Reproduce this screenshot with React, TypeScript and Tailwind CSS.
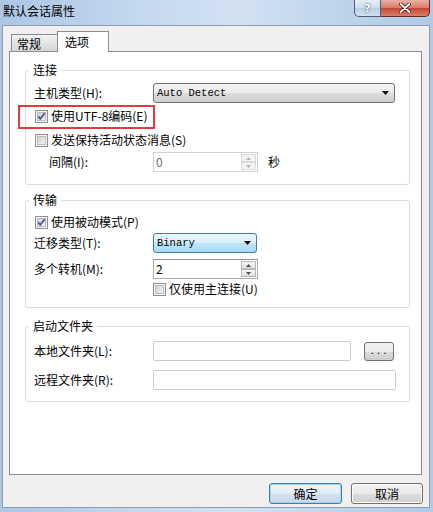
import React from 'react';

// Win7 style dialog: 默认会话属性 / 选项 tab

const CheckBox = ({ checked }: { checked?: boolean }) => (
  <svg width="13" height="13" viewBox="0 0 13 13" className="shrink-0">
    <defs>
      <linearGradient id="cbInner" x1="0" y1="0" x2="1" y2="1">
        <stop offset="0" stopColor="#c9ccd1" />
        <stop offset="1" stopColor="#f7f7f7" />
      </linearGradient>
    </defs>
    <rect x="0.5" y="0.5" width="12" height="12" fill="#f6f6f6" stroke="#8e8f8f" />
    <rect x="2.5" y="2.5" width="8" height="8" fill="url(#cbInner)" stroke="#b9bcc1" />
    {checked && (
      <path d="M3.2 6.3 L5.3 8.8 L9.8 3.2" fill="none" stroke="#4b5f96" strokeWidth="1.9" />
    )}
  </svg>
);

const Arrow = () => (
  <svg width="7" height="4" viewBox="0 0 7 4" className="shrink-0">
    <path d="M0 0 H7 L3.5 4 Z" fill="#000" />
  </svg>
);

const Combo = ({ value, className, focused }: { value: string; className: string; focused?: boolean }) => (
  <div
    className={`flex h-[20px] items-center justify-between rounded-[3px] border pl-[3px] pr-[5px] ${
      focused
        ? 'border-[#3c7fb1] bg-[linear-gradient(to_bottom,#eaf6fd,#d9f0fc_50%,#bee6fd_50%,#a7d9f5)]'
        : 'border-[#707070] bg-[linear-gradient(to_bottom,#f2f2f2,#ebebeb_50%,#dddddd_50%,#cfcfcf)]'
    } ${className}`}
  >
    <span className="font-['Liberation_Mono',monospace] text-[10.5px] leading-[18px]">{value}</span>
    <Arrow />
  </div>
);

const SpinHalf = ({ up, disabled }: { up?: boolean; disabled?: boolean }) => (
  <div
    className={`flex h-[8px] items-center justify-center border ${
      disabled ? 'border-[#dadada] bg-[#f4f4f4]' : 'border-[#b5b8bd] bg-[linear-gradient(to_bottom,#f6f6f6,#e1e1e1)]'
    }`}
  >
    <svg width="5" height="3" viewBox="0 0 5 3">
      <path d={up ? 'M0 3 H5 L2.5 0 Z' : 'M0 0 H5 L2.5 3 Z'} fill={disabled ? '#b5b5b5' : '#4d4d4d'} />
    </svg>
  </div>
);

const Spin = ({ value, disabled }: { value: string; disabled?: boolean }) => (
  <div
    className={`flex h-[20px] w-[105px] border bg-white ${
      disabled ? 'border-[#cfd1d4] text-[#6d6d6d]' : 'border-[#abadb3] border-t-[#8e9096]'
    }`}
  >
    <span className="flex-1 pl-[2px] leading-[18px]">{value}</span>
    <div className="flex w-[16px] flex-col justify-center py-px pr-px">
      <SpinHalf up disabled={disabled} />
      <SpinHalf disabled={disabled} />
    </div>
  </div>
);

const TextBox = ({ className }: { className: string }) => (
  <div className={`h-[20px] rounded-[2px] border border-[#cbcdd2] bg-white ${className}`} />
);

const Group = ({ title, className, children }: { title: string; className?: string; children: React.ReactNode }) => (
  <div className={`flex flex-col rounded-[3px] border border-[#d5dfe5] pl-[8px] ${className ?? ''}`}>
    <span className="-mt-[8px] ml-[-5px] self-start bg-white px-[4px] leading-[14px]">{title}</span>
    {children}
  </div>
);

const Row = ({
  label,
  className,
  labelClassName,
  children,
}: {
  label: string;
  className?: string;
  labelClassName?: string;
  children?: React.ReactNode;
}) => (
  <div className={`flex h-[20px] items-center ${className ?? ''}`}>
    <span className={`w-[119px] shrink-0 leading-[16px] ${labelClassName ?? ''}`}>{label}</span>
    {children}
  </div>
);

const CheckRow = ({ label, checked, className, children }: { label: string; checked?: boolean; className?: string; children?: React.ReactNode }) => (
  <div className={`relative flex h-[20px] items-center gap-[3px] ${className ?? ''}`}>
    <CheckBox checked={checked} />
    <span className="leading-[16px]">{label}</span>
    {children}
  </div>
);

const PushButton = ({ label, primary, className }: { label: string; primary?: boolean; className?: string }) => (
  <div
    className={`flex h-[21px] items-center justify-center rounded-[3px] border leading-[16px] ${
      primary
        ? 'border-[#3c7fb1] bg-[linear-gradient(to_bottom,#eef5fb,#e2ecf6_50%,#d3e2f0_50%,#c7d9ea)] shadow-[inset_0_0_0_1px_#9fd3f3]'
        : 'border-[#707070] bg-[linear-gradient(to_bottom,#f2f2f2,#ebebeb_50%,#dddddd_50%,#cfcfcf)] shadow-[inset_0_0_0_1px_#fcfcfc]'
    } ${className ?? ''}`}
  >
    {label}
  </div>
);

export default function App() {
  return (
    <div className="flex h-[512px] w-[433px] flex-col bg-[linear-gradient(90deg,#acc6e4_0%,#c3d7ee_30%,#d3e2f3_55%,#bdd3eb_80%,#b1cae7_100%)] pb-[4px] pl-[2px] pr-[3px] font-['Noto_Sans_CJK_SC',sans-serif] text-[12px] text-black">
      {/* title bar */}
      <div className="flex h-[25px] shrink-0 items-start justify-between">
        <span className="pl-[1px] pt-[3px] leading-[16px]">默认会话属性</span>
        <div className="flex">
          <div className="flex h-[17px] w-[27px] items-center justify-center rounded-bl-[5px] border border-t-0 border-[#4d5f77] bg-[linear-gradient(to_bottom,#e6eef8,#cddcec_50%,#b9cde3_50%,#d2e0f0)] font-['DejaVu_Sans',sans-serif] text-[11px] font-bold leading-none text-white [text-shadow:0_0_2px_#1f2f45]">
            ?
          </div>
          <div className="flex h-[17px] w-[49px] items-center justify-center rounded-br-[5px] border border-l-0 border-t-0 border-[#6b2a22] bg-[linear-gradient(to_bottom,#eab0a4,#d97a68_50%,#c4432f_50%,#d9806c)]">
            <svg width="12" height="10" viewBox="0 0 12 10">
              <path d="M1.5 1 L10.5 9 M10.5 1 L1.5 9" stroke="#3b1712" strokeWidth="3.4" strokeLinecap="round" />
              <path d="M1.5 1 L10.5 9 M10.5 1 L1.5 9" stroke="#fff" strokeWidth="1.8" strokeLinecap="round" />
            </svg>
          </div>
        </div>
      </div>

      {/* dialog body */}
      <div className="flex flex-1 flex-col border border-[#8d9db0] bg-[#f0f0f0] pb-[3px] pl-[6px] pr-[7px] pt-[5px]">
        {/* tabs */}
        <div className="flex h-[20px] items-end pl-[2px]">
          <div className="h-[17px] w-[47px] border border-b-0 border-[#898c95] bg-[linear-gradient(to_bottom,#f3f3f3,#e4e4e4_50%,#d7d7d7)] pl-[5px] pt-px leading-[15px]">
            常规
          </div>
          <div className="relative z-10 -mb-px -ml-px h-[21px] w-[52px] border border-b-0 border-[#898c95] bg-white pl-[7px] pt-[2px] leading-[15px]">
            选项
          </div>
        </div>

        {/* tab page */}
        <div className="flex h-[424px] flex-col border border-[#898c95] bg-white pl-[15px] pr-[11px]">
          <Group title="连接" className="mt-[18px] pb-[12px]">
            <Row label="主机类型(H):" className="mt-[6px]">
              <Combo value="Auto Detect" className="w-[242px]" />
            </Row>
            <CheckRow label="使用UTF-8编码(E)" checked className="mt-[3px] pl-px">
              <div className="pointer-events-none absolute -left-[16px] -top-px h-[24px] w-[137px] border-2 border-[#e03b3f]" />
            </CheckRow>
            <CheckRow label="发送保持活动状态消息(S)" className="mt-[4px] pl-px" />
            <Row label="间隔(I):" labelClassName="pl-[15px]" className="mt-[2px]">
              <Spin value="0" disabled />
              <span className="ml-[10px] leading-[16px]">秒</span>
            </Row>
          </Group>

          <Group title="传输" className="mt-[15px] pb-[8px]">
            <CheckRow label="使用被动模式(P)" checked className="mt-[5px] pl-px" />
            <Row label="迁移类型(T):" className="mt-px">
              <Combo value="Binary" focused className="w-[104px]" />
            </Row>
            <Row label="多个转机(M):" className="mt-[6px]">
              <Spin value="2" />
            </Row>
            <CheckRow label="仅使用主连接(U)" className="pl-[119px]" />
          </Group>

          <Group title="启动文件夹" className="mt-[18px] pb-[11px]">
            <Row label="本地文件夹(L):" className="mt-[8px]">
              <TextBox className="w-[198px]" />
              <div className="ml-[13px] flex h-[19px] w-[30px] items-center justify-center rounded-[3px] border border-[#707070] bg-[linear-gradient(to_bottom,#f2f2f2,#ebebeb_50%,#dddddd_50%,#cfcfcf)] pt-[3px] font-['Liberation_Mono',monospace] text-[9px] leading-none tracking-[1px]">
                ...
              </div>
            </Row>
            <Row label="远程文件夹(R):" className="mt-[9px]">
              <TextBox className="w-[243px]" />
            </Row>
          </Group>
        </div>

        {/* dialog buttons */}
        <div className="-mr-px mt-[8px] flex justify-end gap-[9px]">
          <PushButton label="确定" primary className="w-[73px]" />
          <PushButton label="取消" className="w-[72px]" />
        </div>
      </div>
    </div>
  );
}
